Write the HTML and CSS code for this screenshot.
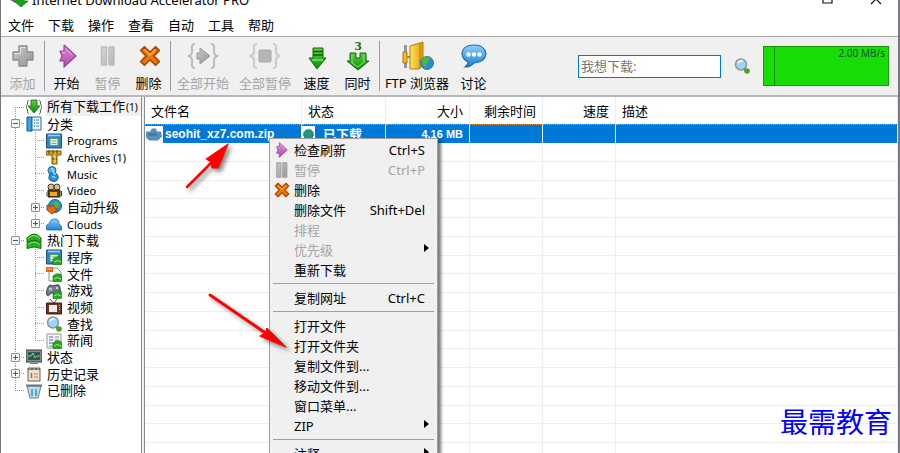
FILE: index.html
```html
<!DOCTYPE html>
<html lang="zh-CN">
<head>
<meta charset="utf-8">
<title>Internet Download Accelerator PRO</title>
<link rel="stylesheet" href="styles.css">
</head>
<body>
<svg class="defs" aria-hidden="true">
  <defs>
    <linearGradient id="gGray" x1="0" y1="0" x2="1" y2="1"><stop offset="0" stop-color="#ccc"/><stop offset="1" stop-color="#939393"/></linearGradient>
    <linearGradient id="gPink" x1="0" y1="0" x2="0" y2="1"><stop offset="0" stop-color="#dc8ad8"/><stop offset="1" stop-color="#b04aaa"/></linearGradient>
    <linearGradient id="gGreen" x1="0" y1="0" x2="0" y2="1"><stop offset="0" stop-color="#57d33c"/><stop offset="1" stop-color="#0b8d0b"/></linearGradient>
    <linearGradient id="gBlue" x1="0" y1="0" x2="0" y2="1"><stop offset="0" stop-color="#8fd0fa"/><stop offset="1" stop-color="#1680dc"/></linearGradient>
    <linearGradient id="gGold" x1="0" y1="0" x2="1" y2="0"><stop offset="0" stop-color="#ffe55c"/><stop offset="1" stop-color="#e09a08"/></linearGradient>
    <symbol id="play" viewBox="0 0 20 24"><path d="M2 7h4V1l12 11L6 23v-6H2l2-5z" fill="url(#gPink)" stroke="#96479a" stroke-width="1.200" stroke-linejoin="round"/><path d="M7.500 4.500l7 6.500M4 8.500h3" stroke="#edb5eb" fill="none"/></symbol>
    <symbol id="cross" viewBox="0 0 24 24"><path d="M6 2l6 6 6-6 4 4-6 6 6 6-4 4-6-6-6 6-4-4 6-6-6-6z" fill="#ef7908" stroke="#b04b00" stroke-width="2" stroke-linejoin="round"/><path d="M6 5l6 6 6-6" stroke="#ffad50" stroke-width="1.500" fill="none"/></symbol>
    <symbol id="pause" viewBox="0 0 16 20"><path d="M1.500 1h5v18h-5zM9 1h5v18H9z" fill="url(#gGray)" stroke="#a2a2a2" stroke-width="1.500" stroke-linejoin="round"/></symbol>
    <symbol id="lens" viewBox="0 0 16 16"><circle cx="7" cy="6.500" r="5.500" fill="#9bd5f6" stroke="#8a97a2" stroke-width="1.500"/><path d="M4 5q2-3 5-2" stroke="#fff" stroke-width="1.500" fill="none"/><path d="M10 11l3 2" stroke="#777" stroke-width="2"/><circle cx="13" cy="13" r="2.800" fill="#48a51a"/></symbol>
    <symbol id="chev" viewBox="0 0 16 16"><path d="M1 5Q8-3 15 5v5q-7-5-14 0zM1 11q7-7 14 0v4.500q-7-3-14 0z" fill="#29ad21" stroke="#11740f"/><path d="M2 5.500q6-6 12 0M2 11.500q6-5 12 0" stroke="#8aef75" fill="none"/></symbol>
    <symbol id="badge" viewBox="0 0 16 16"><path d="M7 10q4-4 8.500-1v6.500H7z" fill="#23a51c" stroke="#127a10" stroke-width=".6"/><path d="M8 13q3-3 7 0" stroke="#a2f08d" fill="none"/></symbol>
    <symbol id="app" viewBox="0 0 16 16"><path d="M.5 1h15v14H.5z" fill="#2f84cf" stroke="#1b4f85"/><path d="M2 2.500h12" stroke="#9fd4fa" stroke-width="1.500"/><path d="M4 5.500h8v7H4z" fill="#eef8ea" stroke="#5b9a62"/><path d="M5.500 8h5M5.500 10.500h5" stroke="#5cbb50"/></symbol>
  </defs>
</svg>

<div class="window">
  <header class="titlebar">
    <svg class="logo" viewBox="0 0 20 13" aria-hidden="true"><path d="M1 0l5 3 3-3z" fill="#777"/><path d="M6-2h9v3h4l-7 6-7-6z" fill="#18a314" stroke="#096b08" stroke-width=".7"/></svg>
    <h1>Internet Download Accelerator PRO</h1>
    <button class="winbtn" type="button" aria-label="最大化"><svg viewBox="0 0 12 13"><path d="M1-6h9v9H1z" fill="none" stroke="#111" stroke-width="1.200"/></svg></button>
    <button class="winbtn" type="button" aria-label="关闭"><svg viewBox="0 0 12 13"><path d="M1 4l10-10M11 4L1-6" stroke="#111" stroke-width="1.200"/></svg></button>
  </header>

  <nav class="menubar">
    <button type="button">文件</button><button type="button">下载</button><button type="button">操作</button><button type="button">查看</button><button type="button">自动</button><button type="button">工具</button><button type="button">帮助</button>
  </nav>

  <div class="toolbar">
    <button class="tool" type="button" disabled><svg viewBox="0 0 32 28"><path d="M12 4h8v6h6v8h-6v6h-8v-6H6v-8h6z" fill="url(#gGray)" stroke="#8b8b8b" stroke-width="1.300" stroke-linejoin="round"/><path d="M13.500 11.500V5.500h5M7.500 11.500h6" stroke="#e2e2e2" fill="none"/></svg>添加</button>
    <span class="sep"></span>
    <button class="tool" type="button"><svg viewBox="0 0 32 28"><use href="#play" x="7" y="2" width="20" height="24"/></svg>开始</button>
    <button class="tool" type="button" disabled><svg viewBox="0 0 32 28" opacity=".65"><use href="#pause" x="8" y="4" width="16" height="20"/></svg>暂停</button>
    <button class="tool" type="button"><svg viewBox="0 0 32 28"><use href="#cross" x="6" y="3" width="22" height="22"/></svg>删除</button>
    <span class="sep"></span>
    <button class="tool wide" type="button" disabled><svg viewBox="0 0 32 28"><path d="M8 2Q4 2 5 7t-3 7q4 2 3 7t3 5M24 2q4 0 3 5t3 7q-4 2-3 7t-3 5" fill="none" stroke="#bcbcbc" stroke-width="2"/><path d="M10 11h3V6l10 8-10 8v-5h-3z" fill="url(#gGray)" stroke="#999"/></svg>全部开始</button>
    <button class="tool wide" type="button" disabled><svg viewBox="0 0 32 28"><path d="M8 2Q4 2 5 7t-3 7q4 2 3 7t3 5M24 2q4 0 3 5t3 7q-4 2-3 7t-3 5" fill="none" stroke="#ccc" stroke-width="2"/><rect x="10" y="8" width="12" height="12" rx="1" fill="#b5b5b5" stroke="#a8a8a8"/></svg>全部暂停</button>
    <button class="tool" type="button"><svg viewBox="0 0 32 28"><path d="M12 6h10v10h3l-9 11-8-11h4z" fill="url(#gGreen)" stroke="#176217"/><path d="M12 9.500h10M12 13h10" stroke="#105c10" stroke-width="1.300"/><path d="M11 18h11" stroke="#79e35c" stroke-width="1.500"/></svg>速度</button>
    <button class="tool" type="button"><svg viewBox="0 0 32 28"><text class="count" x="16" y="8" text-anchor="middle">3</text><path d="M8 11h6v5h4v-5h6v8h3L16 28 5 19h3z" fill="url(#gGreen)" stroke="#176217"/><path d="M10 13v8l6 4 6-5v-7" stroke="#83e866" fill="none"/></svg>同时</button>
    <span class="sep"></span>
    <button class="tool ftp" type="button"><svg viewBox="0 0 32 28"><path d="M4.500 3v23" stroke="#8998a5" stroke-width="3"/><path d="M2 10h4v11H2z" fill="#f7b625" stroke="#b87508"/><path d="M6 15h4" stroke="#888" stroke-width="2"/><path d="M9 4l13-4v23l-4 4H9z" fill="url(#gGold)" stroke="#b57907"/><path d="M19 2v25" stroke="#b97a07"/><circle cx="26" cy="21" r="6.500" fill="#258ad4" stroke="#2d77ae"/><path d="M21 17q5-5 8 0l-3 4-1 4q-4 0-4-8" fill="#4dbb35"/></svg>FTP 浏览器</button>
    <button class="tool" type="button"><svg viewBox="0 0 32 28"><path d="M10 20Q4 17 4 11 5 3 16 3t12 9q-1 8-12 9-4 4-9 4 3-2 3-5z" fill="url(#gBlue)" stroke="#1870b7" stroke-width="1.200"/><g fill="#fff"><circle cx="10.500" cy="12.500" r="2.200"/><circle cx="16" cy="12.500" r="2.200"/><circle cx="21.500" cy="12.500" r="2.200"/></g></svg>讨论</button>
    <form class="search">
      <input type="text" placeholder="我想下载:" aria-label="我想下载">
      <button type="button" aria-label="搜索"><svg viewBox="0 0 16 16"><use href="#lens"/></svg></button>
    </form>
    <div class="meter"><span>2.00 MB/s</span></div>
  </div>

  <main class="content">
    <nav class="side">
    <ul class="tree">
      <li class="first"><i class="node"></i><svg viewBox="0 0 16 16"><path d="M3 1Q1 1 1.500 5L0 8l1.500 3Q1 15 3 15M13 1q2 0 1.500 4L16 8l-1.500 3q.5 4-1.500 4" fill="none" stroke="#666"/><path d="M5 1h6v6h3l-6 7-6-7h3z" fill="url(#gGreen)" stroke="#176217" stroke-width=".8"/></svg><span class="label current">所有下载工作<small>(1)</small></span></li>
      <li><i class="node"><button type="button" class="minus" aria-label="折叠"></button></i><svg viewBox="0 0 16 16"><path d="M1 1h5v14H1z" fill="#3d9fe4" stroke="#15558e"/><path d="M6 1h9v13H6z" fill="#e4f3fd" stroke="#2b6da5"/><path d="M8 4h1M8 7h1M8 10h1" stroke="#245a8a"/><path d="M10 4h3M10 7h3M10 10h3" stroke="#4a89ba"/></svg><span class="label">分类</span></li>
      <li><i class="line"></i><i class="node"></i><svg viewBox="0 0 16 16"><use href="#app"/></svg><span class="label latin">Programs</span></li>
      <li><i class="line"></i><i class="node"></i><svg viewBox="0 0 16 16"><path d="M0 2h15v4h-4v9H6V6H0z" fill="#d8a526" stroke="#765609"/><path d="M3 1v4M7 1v4M11 1v4M6 10h5" stroke="#5c4308"/><path d="M7 7h2v7" stroke="#ffe683" fill="none"/></svg><span class="label latin">Archives (1)</span></li>
      <li><i class="line"></i><i class="node"></i><svg viewBox="0 0 16 16"><circle cx="6" cy="4.500" r="4" fill="#53aee8" stroke="#14649d"/><path d="M4 7q7-1 8 3 1 5-4 5.500-6-.5-5-5z" fill="#2990d5" stroke="#14649d"/><path d="M5 3q2-1 2 2t3 3M6 11q2-1 3 1" fill="none" stroke="#b8e3fc" stroke-width="1.200"/></svg><span class="label latin">Music</span></li>
      <li><i class="line"></i><i class="node"></i><svg viewBox="0 0 16 16"><circle cx="5" cy="4" r="3" fill="#d2bf96" stroke="#4b3c25"/><circle cx="11" cy="4" r="3" fill="#d2bf96" stroke="#4b3c25"/><path d="M2 7h12v7H2z" fill="#5b4524" stroke="#2c2111"/><path d="M4 9h7v4H4z" fill="#f0a726"/><path d="M0 9v4M15.500 8v5" stroke="#333"/></svg><span class="label latin">Video</span></li>
      <li><i class="line"></i><i class="node"><button type="button" class="plus" aria-label="展开"></button></i><svg viewBox="0 0 16 16"><circle cx="9" cy="7" r="6.500" fill="#258fd7" stroke="#185f96"/><path d="M8 2q5 0 6 4l-4 4-3-4z" fill="#50b63a"/><path d="M1 6l3 2 3-2 4 5-5 4-5-4z" fill="#e36b15" stroke="#9e3d06"/></svg><span class="label">自动升级</span></li>
      <li class="lastsub"><i class="line"></i><i class="node"><button type="button" class="plus" aria-label="展开"></button></i><svg viewBox="0 0 16 16"><path d="M1 14q-3-5 2-6 1-5 6-5 4 0 4 5 3 1 3 6z" fill="url(#gBlue)" stroke="#196db1" stroke-width=".8"/></svg><span class="label latin">Clouds</span></li>
      <li><i class="node"><button type="button" class="minus" aria-label="折叠"></button></i><svg viewBox="0 0 16 16"><use href="#chev"/></svg><span class="label">热门下载</span></li>
      <li><i class="line"></i><i class="node"></i><svg viewBox="0 0 16 16"><use href="#app"/><use href="#badge"/></svg><span class="label">程序</span></li>
      <li><i class="line"></i><i class="node"></i><svg viewBox="0 0 16 16"><path d="M3 2h8l4 4v9H3z" fill="#fafafa" stroke="#999178"/><path d="M0 1h7v5H0z" fill="#e8640f"/><path d="M1 3h5" stroke="#fbc49d"/><use href="#badge"/></svg><span class="label">文件</span></li>
      <li><i class="line"></i><i class="node"></i><svg viewBox="0 0 16 16"><path d="M4 2q3 2 6 0 4-1 4 3l1 6q-2 2-4-1H5q-3 5-4.500 1 0-7 3.500-9z" fill="#747c91" stroke="#373d50"/><circle cx="4.500" cy="6" r="1.500" fill="#c5cbe0"/><circle cx="11" cy="5" r="1" fill="#eee"/><use href="#badge"/></svg><span class="label">游戏</span></li>
      <li><i class="line"></i><i class="node"></i><svg viewBox="0 0 16 16"><path d="M4 0l4 4 3-4" stroke="#555" fill="none"/><path d="M.5 4h15v11H.5z" fill="#743621" stroke="#41190e"/><path d="M3 6h8v7H3z" fill="#e4f0ef"/><path d="M13.500 6v5" stroke="#e8bb68" stroke-dasharray="1 1"/></svg><span class="label">视频</span></li>
      <li><i class="line"></i><i class="node"></i><svg viewBox="0 0 16 16"><use href="#lens"/></svg><span class="label">查找</span></li>
      <li class="lastsub"><i class="line"></i><i class="node"></i><svg viewBox="0 0 16 16"><path d="M1 1h14v14H1z" fill="#f5f5f5" stroke="#999"/><path d="M3 4h4M3 7h4M3 10h4" stroke="#3a6fbf"/><path d="M9 4h4M9 7h4M3 13h4" stroke="#888"/><use href="#badge"/></svg><span class="label">新闻</span></li>
      <li><i class="node"><button type="button" class="plus" aria-label="展开"></button></i><svg viewBox="0 0 16 16"><path d="M0 1h16v12H0z" fill="#7b8f90" stroke="#333f42"/><path d="M2 3h12v8H2z" fill="#31545a"/><path d="M2 7h3l2-3 2 5 2-2h3" stroke="#7de36a" fill="none"/><path d="M4 14.500h8" stroke="#777"/></svg><span class="label">状态</span></li>
      <li><i class="node"><button type="button" class="plus" aria-label="展开"></button></i><svg viewBox="0 0 16 16"><path d="M2 2h12v13H2z" fill="#e8e0d0" stroke="#6b6255"/><path d="M2 2h12v2H2z" fill="#6b6255"/><path d="M4 0v4M8 0v4M12 0v4" stroke="#c9c2b5"/><path d="M5.500 7v5" stroke="#db5c22" stroke-width="1.500"/><path d="M8 8h4M8 11h4" stroke="#b88552"/></svg><span class="label">历史记录</span></li>
      <li class="last"><i class="node"></i><svg viewBox="0 0 16 16"><path d="M1 3h14l-3 12H4z" fill="#b9e1f2" stroke="#6d7a80"/><path d="M0 2.500h16" stroke="#6e7477" stroke-width="2"/><path d="M6 6v7M10 6v7" stroke="#3c8fbb" stroke-width="1.500"/></svg><span class="label">已删除</span></li>
    </ul>
    </nav>

    <section class="list">
      <table>
        <colgroup><col class="c-name"><col class="c-state"><col class="c-state"><col class="c-num"><col class="c-num"><col></colgroup>
        <thead><tr><th>文件名</th><th>状态</th><th class="num">大小</th><th class="num">剩余时间</th><th class="num">速度</th><th>描述</th></tr></thead>
        <tbody>
          <tr class="selected"><td class="file"><div><svg viewBox="0 0 16 12"><path d="M0 3h4l2-3h4l1 3h4l1 5-4 4H3L0 9z" fill="#5391ba"/><path d="M2 6h9" stroke="#3b749e" stroke-width="2"/></svg><b>seohit_xz7.com.zip</b></div></td><td class="state"><div><svg viewBox="0 0 14 16"><circle cx="7" cy="8" r="5.500" fill="#159487" stroke="#3a6dab" stroke-dasharray="2 1"/><path d="M5 5h4v3h2l-4 4-4-4h2z" fill="#1fa063"/></svg><b>已下载</b></div></td><td class="num"><b>4.16 MB</b></td><td></td><td></td><td></td></tr>
          <tr><td></td><td></td><td></td><td></td><td></td><td></td></tr>
          <tr><td></td><td></td><td></td><td></td><td></td><td></td></tr>
          <tr><td></td><td></td><td></td><td></td><td></td><td></td></tr>
          <tr><td></td><td></td><td></td><td></td><td></td><td></td></tr>
          <tr><td></td><td></td><td></td><td></td><td></td><td></td></tr>
          <tr><td></td><td></td><td></td><td></td><td></td><td></td></tr>
          <tr><td></td><td></td><td></td><td></td><td></td><td></td></tr>
          <tr><td></td><td></td><td></td><td></td><td></td><td></td></tr>
          <tr><td></td><td></td><td></td><td></td><td></td><td></td></tr>
          <tr><td></td><td></td><td></td><td></td><td></td><td></td></tr>
          <tr><td></td><td></td><td></td><td></td><td></td><td></td></tr>
          <tr><td></td><td></td><td></td><td></td><td></td><td></td></tr>
          <tr><td></td><td></td><td></td><td></td><td></td><td></td></tr>
          <tr><td></td><td></td><td></td><td></td><td></td><td></td></tr>
          <tr><td></td><td></td><td></td><td></td><td></td><td></td></tr>
          <tr><td></td><td></td><td></td><td></td><td></td><td></td></tr>
          <tr><td></td><td></td><td></td><td></td><td></td><td></td></tr>
        </tbody>
      </table>
    </section>
  </main>
</div>

<div class="popup">
  <button type="button"><svg viewBox="0 0 16 16"><use href="#play"/></svg>检查刷新<kbd>Ctrl+S</kbd></button>
  <button type="button" disabled><svg viewBox="0 0 16 16"><use href="#pause"/></svg>暂停<kbd>Ctrl+P</kbd></button>
  <button type="button"><svg viewBox="0 0 16 16"><use href="#cross"/></svg>删除</button>
  <button type="button"><i></i>删除文件<kbd>Shift+Del</kbd></button>
  <button type="button" disabled><i></i>排程</button>
  <button type="button" disabled class="sub"><i></i>优先级</button>
  <button type="button"><i></i>重新下载</button>
  <hr>
  <button type="button"><i></i>复制网址<kbd>Ctrl+C</kbd></button>
  <hr>
  <button type="button"><i></i>打开文件</button>
  <button type="button"><i></i>打开文件夹</button>
  <button type="button"><i></i>复制文件到...</button>
  <button type="button"><i></i>移动文件到...</button>
  <button type="button"><i></i>窗口菜单...</button>
  <button type="button" class="sub"><i></i>ZIP</button>
  <hr>
  <button type="button" class="sub"><i></i>注释</button>
</div>

<svg class="arrows" viewBox="0 0 120 220" aria-hidden="true">
  <g fill="#f00" stroke="#f00" stroke-linejoin="round" stroke-linecap="round">
    <path d="M7 52L32 27" stroke-width="2.500"/><path d="M48 9L26 24l5 3 1 6 6 0z" stroke-width="1"/>
    <path d="M30 160l54 37" stroke-width="3"/><path d="M106 212L87 193l-2 5-5 3z" stroke-width="1"/>
  </g>
</svg>
<p class="mark">最需教育</p>
</body>
</html>
```
FILE: styles.css
```css
* { box-sizing: border-box; }

body {
  margin: 0;
  overflow: hidden;
  background: #fff;
  color: #000;
  font: 13px/20px "Noto Sans", "Noto Sans CJK SC", sans-serif;
}

button { padding: 0; border: 0; background: none; color: inherit; font: inherit; }
.defs { position: absolute; width: 0; height: 0; }

.window {
  display: flex;
  flex-direction: column;
  height: 100vh;
  border-left: 1px solid #777;
  border-right: 2px solid #777b80;
}

/* Title bar, partly scrolled off the top edge */
.titlebar { display: flex; align-items: flex-start; height: 13px; padding: 0 16px 0 8px; overflow: hidden; }
.logo { width: 20px; height: 13px; margin-right: 3px; }
.titlebar h1 { flex: 1; margin: -10px 0 0; font-size: 13px; font-weight: 400; line-height: 20px; }
.winbtn { width: 12px; height: 13px; margin-left: 36px; }
.winbtn svg { display: block; width: 12px; height: 13px; }

.menubar { display: flex; gap: 14px; height: 23px; padding: 2px 7px; }

/* Toolbar */
.toolbar {
  display: flex;
  align-items: center;
  height: 61px;
  padding: 0 9px 0 1px;
  background: #f0f0f0;
  border-top: 1px solid #aaa;
  border-bottom: 2px solid #b5b8bb;
}
.tool { display: flex; flex-direction: column; align-items: center; gap: 3px; width: 41px; flex: none; padding-top: 2px; white-space: nowrap; }
.tool svg { width: 32px; height: 28px; overflow: visible; }
.tool:disabled { color: #a5a5a5; }
.tool.wide { width: 62px; }
.tool.ftp { width: 72px; }
.count { font: bold 11px "DejaVu Serif", serif; fill: #167016; }
.sep { width: 1px; height: 50px; margin: 0 1px; background: #999; flex: none; }
.search { display: flex; align-items: center; gap: 13px; margin-left: auto; }
.search input {
  width: 143px;
  height: 23px;
  padding: 0 2px;
  border: 1px solid #0078d7;
  background: #fff;
  font: inherit;
}
.search input::placeholder { color: #777; }
.search svg { display: block; width: 16px; height: 16px; }
.meter {
  width: 126px;
  height: 40px;
  margin-left: 13px;
  padding-right: 3px;
  border: 1px solid #1a9a0b;
  background: linear-gradient(90deg, transparent 10px, #128c08 10px 11px, transparent 11px), #18dc05;
  color: #174f3a;
  font-size: 10px;
  line-height: 12px;
  text-align: right;
}

.content { display: flex; flex: 1; min-height: 0; background: #f0f0f0; }

/* Category tree */
.side { flex: none; width: 141px; overflow: hidden; background: #fff; border-right: 1px solid #858b91; }
.tree {
  display: grid;
  grid-template-rows: repeat(18, minmax(0, 1fr));
  height: 302px;
  margin: 0;
  padding: 2px 0 0 4px;
  list-style: none;
}
.tree li { display: flex; align-items: center; min-width: 0; white-space: nowrap; }
.tree li > svg { width: 16px; height: 16px; flex: none; margin: 0 3px 0 1px; }
.tree i {
  display: flex;
  align-items: center;
  justify-content: center;
  align-self: stretch;
  flex: none;
  width: 20px;
  background: repeating-linear-gradient(#999 0 1px, transparent 1px 2px) 10px 0 / 1px 100% no-repeat;
}
.tree .node {
  background:
    repeating-linear-gradient(#999 0 1px, transparent 1px 2px) 10px 0 / 1px 100% no-repeat,
    repeating-linear-gradient(90deg, #999 0 1px, transparent 1px 2px) 10px 50% / 10px 1px no-repeat;
}
.tree .first .node { background-position: 10px 100%, 10px 50%; background-size: 1px 50%, 10px 1px; }
.tree .last .node, .tree .lastsub .node { background-size: 1px 50%, 10px 1px; }
.tree button { width: 9px; height: 9px; border: 1px solid #909090; border-radius: 1px; }
.tree .minus { background: linear-gradient(#345aa8, #345aa8) center / 5px 1px no-repeat, #f5f5f5; }
.tree .plus { background: linear-gradient(#345aa8, #345aa8) center / 5px 1px no-repeat, linear-gradient(#345aa8, #345aa8) center / 1px 5px no-repeat, #f5f5f5; }
.label { padding-left: 2px; line-height: 17px; }
.label small { padding-left: 1px; font-size: 10px; }
.current { flex: 1; background: #f0f0f0; }
.latin { font: 11px/17px "Noto Sans", sans-serif; }

/* Download list */
.list { flex: 1; min-width: 0; margin-left: 2px; overflow: hidden; background: #fff; border-left: 1px solid #858b91; }
table { width: 100%; table-layout: fixed; border-collapse: separate; border-spacing: 0; }
.c-name { width: 157px; }
.c-state { width: 84px; }
.c-num { width: 73px; }
th, td { padding: 0 6px; border-right: 1px solid #eee; text-align: left; white-space: nowrap; }
th { height: 27px; font-weight: 400; }
td { height: 19px; border-bottom: 1px solid #eee; line-height: 17px; }
tr:nth-child(4n) td { height: 18px; }
.num { text-align: right; }
td b { font: bold 12px/17px "Liberation Sans", "Noto Sans CJK SC", sans-serif; }
.selected td { height: 18px; background: #0078d7; color: #fff; border-top: 1px dotted #e59a50; border-bottom: 0; }
.selected .file, .selected .state { padding: 0; }
.selected .num b { font-size: 11px; }
.selected div { display: flex; }
.file svg { width: 18px; height: 17px; padding: 1px; background: #fff; flex: none; }
.file b { padding-left: 2px; }
.state svg { width: 13px; height: 17px; background: #fff; flex: none; }
.state b { padding-left: 8px; font-size: 13px; }

/* Context menu */
.popup {
  position: absolute;
  left: 269px;
  top: 138px;
  width: 169px;
  padding: 1px;
  background: #f0f0f0;
  border: 1px solid #a0a0a0;
  box-shadow: 3px 3px 3px #0008;
}
.popup button { display: flex; align-items: center; width: 100%; height: 20px; padding: 0 11px 0 3px; white-space: nowrap; }
.popup button:disabled { color: #a5a5a5; }
.popup svg, .popup i { width: 16px; height: 16px; margin-right: 4px; flex: none; }
.popup kbd { margin-left: auto; font: 13px/20px "Noto Sans", sans-serif; }
.popup hr { height: 1px; margin: 3px 2px 4px; border: 0; background: #a0a0a0; }
.sub::after { content: ""; margin: 0 -4px 4px auto; border: 4px solid transparent; border-left: 5px solid #000; border-right: 0; }

/* Annotations lying over the window */
.arrows { position: absolute; left: 180px; top: 135px; width: 120px; height: 220px; filter: drop-shadow(3px 3px 2px #0007); pointer-events: none; }
.mark { position: absolute; right: 8px; bottom: 12px; margin: 0; color: #00f; font: 28px/40px "Noto Sans CJK SC", serif; }
```
